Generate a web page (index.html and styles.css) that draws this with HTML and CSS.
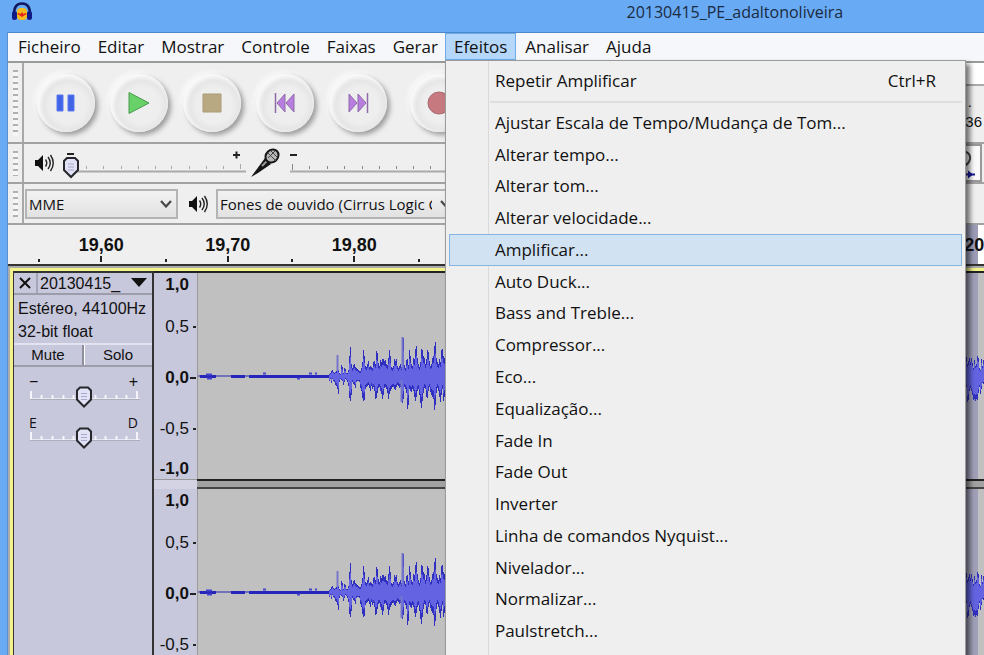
FILE: index.html
```html
<!DOCTYPE html>
<html lang="pt">
<head>
<meta charset="utf-8">
<title>20130415_PE_adaltonoliveira</title>
<link rel="stylesheet" href="styles.css">
</head>
<body>
<svg class="defs" width="0" height="0" aria-hidden="true">
  <symbol id="thumb" viewBox="0 0 18 22">
    <path d="M5 1.5h8l3 3v9l-7 7-7-7v-9z" fill="#e2e2f6" stroke="#26262c" stroke-width="2"/>
    <path d="M6 7.500h6M6 10.500h6M6 13.500h6" stroke="#a9a9cc"/>
  </symbol>
  <symbol id="speaker" viewBox="0 0 20 20">
    <path d="M1 7h3l5-5v16l-5-5H1z" fill="#111"/>
    <path d="M11.500 6.500q2.500 3.500 0 7M14 4q4.500 6 0 12M16.500 2q5.500 8 0 16" fill="none" stroke="#222" stroke-width="1.400"/>
  </symbol>
  <symbol id="chevron" viewBox="0 0 12 8"><path d="M1 1l5 5.500L11 1" fill="none" stroke="#484848" stroke-width="2.200"/></symbol>
</svg>

<header class="titlebar">
  <svg class="app-icon" width="22" height="20" viewBox="0 0 22 20" aria-hidden="true">
    <path d="M3 12C3 5 6 1.500 11 1.500S19 5 19 12" fill="none" stroke="#12185e" stroke-width="2.500"/>
    <rect x="6" y="6" width="10" height="12" rx="4" fill="#f7b91c"/>
    <path d="M6 12l2-1 1.500 1 1.500-2 1.500 2 1.500-1 2 1-2 1-1.500 1-1.500 1-1.500-1-1.500-1z" fill="#e8261b"/>
    <rect x="1" y="9" width="5" height="9" rx="2.500" fill="#101a86"/>
    <rect x="16" y="9" width="5" height="9" rx="2.500" fill="#101a86"/>
  </svg>
  <h1 class="title">20130415_PE_adaltonoliveira</h1>
</header>

<main class="window">
  <nav class="menubar">
    <button>Ficheiro</button>
    <button>Editar</button>
    <button>Mostrar</button>
    <button>Controle</button>
    <button>Faixas</button>
    <button>Gerar</button>
    <div class="menu-root">
      <button class="open" aria-expanded="true">Efeitos</button>
      <div class="menu" role="menu">
        <button role="menuitem" class="repeat"><span>Repetir Amplificar</span><span>Ctrl+R</span></button>
        <hr>
        <div class="menu-list">
          <button role="menuitem">Ajustar Escala de Tempo/Mudança de Tom...</button>
          <button role="menuitem">Alterar tempo...</button>
          <button role="menuitem">Alterar tom...</button>
          <button role="menuitem">Alterar velocidade...</button>
          <button role="menuitem" class="selected">Amplificar...</button>
          <button role="menuitem">Auto Duck...</button>
          <button role="menuitem">Bass and Treble...</button>
          <button role="menuitem">Compressor...</button>
          <button role="menuitem">Eco...</button>
          <button role="menuitem">Equalização...</button>
          <button role="menuitem">Fade In</button>
          <button role="menuitem">Fade Out</button>
          <button role="menuitem">Inverter</button>
          <button role="menuitem">Linha de comandos Nyquist...</button>
          <button role="menuitem">Nivelador...</button>
          <button role="menuitem">Normalizar...</button>
          <button role="menuitem">Paulstretch...</button>
        </div>
      </div>
    </div>
    <button>Analisar</button>
    <button>Ajuda</button>
  </nav>

  <section class="dock">
    <div class="row transport">
      <div class="grip"></div>
      <div class="round-buttons">
        <button aria-label="Pausa"><svg width="24" height="24"><path d="M3 4h6v16H3zM14 4h6v16h-6z" fill="#4163e6" stroke="#5b7af0"/></svg></button>
        <button aria-label="Tocar"><svg width="24" height="24"><path d="M2 1.500v21L22 12z" fill="#68d168" stroke="#4b9a4f"/></svg></button>
        <button aria-label="Parar"><svg width="24" height="24"><path d="M3 3h18v18H3z" fill="#b9a983" stroke="#aa9b77"/></svg></button>
        <button aria-label="Início"><svg width="24" height="24"><path d="M2.500 2v20" stroke="#8d6ba8" stroke-width="1.500"/><path d="M12 3v18L4 12zM21 3v18l-8-9z" fill="#b77ee0" stroke="#8d6ba8"/></svg></button>
        <button aria-label="Fim"><svg width="24" height="24"><path d="M21.500 2v20" stroke="#8d6ba8" stroke-width="1.500"/><path d="M3 3v18l8-9zM12 3v18l8-9z" fill="#b77ee0" stroke="#8d6ba8"/></svg></button>
        <button aria-label="Gravar" class="record"><svg width="24" height="24"><circle cx="12" cy="12" r="11" fill="#c67a80" stroke="#a86a6e"/></svg></button>
      </div>
      <div class="meter"><div class="meter-bar"></div><span class="meter-dot">.</span><span class="meter-scale">-36</span></div>
    </div>

    <div class="row mixer">
      <div class="grip"></div>
      <svg class="speaker" width="20" height="20" aria-hidden="true"><use href="#speaker"/></svg>
      <div class="slider">
        <svg width="190" height="34" aria-hidden="true">
          <path d="M10 25.500h176" stroke="#aaa" stroke-width="2"/>
          <path d="M26.500 20v3M43.500 20v3M61.500 20v3M78.500 20v3M95.500 20v3M111.500 20v3M129.500 20v3M146.500 20v3M163.500 20v3M180.500 18v5" stroke="#aaa"/>
          <path d="M7 8h7M173 9h7M176.500 5.500v7" stroke="#222" stroke-width="2"/>
          <use href="#thumb" x="2" y="10" width="18" height="23"/>
        </svg>
        <input type="range" aria-label="Volume de saída" value="0">
      </div>
      <svg class="mic" width="30" height="30" viewBox="0 0 30 30" aria-hidden="true">
        <path d="M1 29l14-19 6 6-13 9z" fill="#161616"/><path d="M12 18l5-5" stroke="#999" stroke-width="2"/>
        <ellipse cx="22" cy="8" rx="6" ry="7" transform="rotate(45 22 8)" fill="#b7b7b7" stroke="#161616" stroke-width="2"/>
        <path d="M18 5l8 8M21 3l6 6M18 10l7-7" stroke="#444"/>
      </svg>
      <div class="slider input-level">
        <svg width="190" height="34" aria-hidden="true">
          <path d="M8 25.500h182" stroke="#aaa" stroke-width="2"/>
          <path d="M10.500 18v6M27.500 20v3M45.500 20v3M62.500 20v3M80.500 20v3M97.500 20v3M114.500 20v3M131.500 20v3M148.500 20v3" stroke="#888"/>
          <path d="M8 9h7" stroke="#222" stroke-width="2"/>
        </svg>
        <input type="range" aria-label="Volume de entrada" value="100">
      </div>
      <div class="zoom-tool">
        <svg width="18" height="36" aria-hidden="true"><path d="M0 5q9 1 8 8-1 6-8 7" fill="none" stroke="#444" stroke-width="2"/><path d="M0 28.500h13" stroke="#1a1a9a" stroke-width="2"/><path d="M6 24.500l5 4-5 4z" fill="#1a1a9a"/></svg>
      </div>
    </div>

    <div class="row devices">
      <div class="grip"></div>
      <div class="select host"><select aria-label="Servidor de áudio"><option>MME</option></select><svg width="12" height="8"><use href="#chevron"/></svg></div>
      <svg class="speaker" width="20" height="20" aria-hidden="true"><use href="#speaker"/></svg>
      <div class="select output"><select aria-label="Saída de áudio"><option>Fones de ouvido (Cirrus Logic CS)</option></select><svg width="12" height="8"><use href="#chevron"/></svg></div>
    </div>
  </section>

  <section class="ruler">
    <span>19,60</span><span>19,70</span><span>19,80</span><span></span><span></span><span></span><span></span><span>20,30</span>
  </section>

  <section class="tracks">
    <div class="track">
      <aside class="panel">
        <div class="panel-title">
          <button aria-label="Fechar"><svg width="12" height="12"><path d="M1 1l10 10M11 1L1 11" stroke="#111" stroke-width="2"/></svg></button>
          <button class="name"><span>20130415_</span><svg width="16" height="10"><path d="M0 0h16l-8 9z" fill="#111"/></svg></button>
        </div>
        <p class="info">Estéreo, 44100Hz<br>32-bit float</p>
        <div class="toggles"><button>Mute</button><button>Solo</button></div>
        <div class="gain"><span>−</span><span>+</span></div>
        <div class="slider small">
          <svg width="112" height="22" aria-hidden="true">
            <path d="M1 13.500h110" stroke="#aeaebb"/><path d="M1 12.500h110" stroke="#e8e8f2"/>
            <path d="M2 5v8M12.500 9v4M23.500 9v4M34.500 9v4M44.500 9v4M66.500 9v4M76.500 9v4M87.500 9v4M97.500 9v4M108 5v8" stroke="#f4f4fa" stroke-width="2"/>
            <use href="#thumb" x="46" y="0" width="18" height="22"/>
          </svg>
          <input type="range" aria-label="Ganho">
        </div>
        <div class="gain pan"><span>E</span><span>D</span></div>
        <div class="slider small">
          <svg width="112" height="22" aria-hidden="true">
            <path d="M1 13.500h110" stroke="#aeaebb"/><path d="M1 12.500h110" stroke="#e8e8f2"/>
            <path d="M2 5v8M12.500 9v4M23.500 9v4M34.500 9v4M44.500 9v4M66.500 9v4M76.500 9v4M87.500 9v4M97.500 9v4M108 5v8" stroke="#f4f4fa" stroke-width="2"/>
            <use href="#thumb" x="46" y="0" width="18" height="22"/>
          </svg>
          <input type="range" aria-label="Balanço">
        </div>
      </aside>
      <div class="channels">
        <div class="channel">
          <div class="scale"><b>1,0</b><span class="tick">0,5</span><b class="tick zero">0,0</b><span class="tick">-0,5</span><b>-1,0</b></div>
          <svg class="wave" aria-hidden="true"></svg>
        </div>
        <div class="gap"><i></i><i class="bar"></i></div>
        <div class="channel">
          <div class="scale"><b>1,0</b><span class="tick">0,5</span><b class="tick zero">0,0</b><span class="tick">-0,5</span></div>
          <svg class="wave" aria-hidden="true"></svg>
        </div>
      </div>
    </div>
  </section>
</main>
<script src="wave.js"></script>
</body>
</html>
```
FILE: styles.css
```css
* { box-sizing: border-box; }
body {
  margin: 0;
  height: 100vh;
  overflow: hidden;
  display: flex;
  flex-direction: column;
  background: #69aaf5;
  color: #111;
  font: 17px/20px "Open Sans", "Noto Sans", sans-serif;
}
button, select { font: inherit; color: inherit; border: 0; background: none; padding: 0; margin: 0; }
.defs { position: absolute; }

.titlebar { display: flex; flex: none; height: 32px; padding-left: 11px; align-items: flex-start; }
.app-icon { margin-top: 2px; }
.title { margin: 2px 0 0 61%; font-size: 16px; font-weight: 400; line-height: 20px; color: #1b2b40; white-space: nowrap; }

.window {
  flex: 1;
  min-height: 0;
  display: flex;
  flex-direction: column;
  overflow: hidden;
  margin-left: 7px;
  border-left: 1px solid #5a8fd0;
  border-top: 1px solid #4c86cc;
  background: #efefef;
}
.menubar { display: flex; flex: none; height: 30px; padding: 0 0 2px 2px; background: #f5f7fa; border-bottom: 2px solid #9a9a9a; }
.menubar > button, .open { padding: 0 9px 0 8px; height: 27px; white-space: nowrap; }
.menu-root { position: relative; z-index: 2; margin: 0 1px 0 -2px; }
.menubar .open { background: #b5d8fa; border: 1px solid #6fabe6; padding: 0 8px; }

.menu {
  position: absolute;
  top: 27px;
  left: 0;
  width: 521px;
  height: 100vh;
  padding: 4px 3px;
  border: 1px solid #9b9b9b;
  background: linear-gradient(90deg, transparent 42px, #dadada 42px, #dadada 43px, transparent 43px) #efefef;
  box-shadow: 4px 4px 5px rgba(0, 0, 0, .55);
}
.menu button { display: flex; align-items: center; width: 100%; padding: 0 25px 0 45px; border: 1px solid transparent; text-align: left; white-space: nowrap; }
.menu .repeat { justify-content: space-between; height: 32px; }
.menu hr { margin: 4px 0 4px 41px; border: 0; border-top: 2px solid #dedede; }
.menu-list { display: grid; grid-auto-rows: 1fr; height: 540px; }
.menu .selected { background: #d1e2f2; border-color: #86b4e2; }

.row { display: flex; align-items: center; border-bottom: 2px solid #a2a2a2; overflow: hidden; }
.transport { height: 81px; }
.mixer { height: 40px; }
.devices { height: 41px; }
.grip {
  align-self: stretch;
  flex: none;
  width: 16px;
  border-right: 2px solid #a8a8a8;
  background: repeating-linear-gradient(#b0b0b0 0 2px, #f6f6f6 2px 6px) content-box #f6f6f6;
  padding: 7px 4px 6px 5px;
}
.round-buttons { display: flex; gap: 15px; margin-left: 13px; }
.round-buttons button {
  display: grid;
  place-items: center;
  width: 58px;
  height: 58px;
  border-radius: 50%;
  background: radial-gradient(circle at 54% 54%, #eee 40%, #e6e6e6 56%, #f8f8f8 68%);
  box-shadow: 3px 3px 5px #9c9c9c, -2px -2px 5px #fbfbfb;
}
.round-buttons .record { margin-left: 8px; }
.meter { display: flex; flex-direction: column; align-self: stretch; align-items: flex-end; width: 44px; margin-left: auto; padding-right: 2px; font: 15px/16px "Liberation Sans", sans-serif; }
.meter-bar { align-self: stretch; height: 23px; margin-right: -2px; background: #fff; border-bottom: 2px solid #aaa; }
.meter-dot { margin: 8px 10px 0 0; }
.meter-scale { margin-top: 4px; }
.speaker { flex: none; margin: 0 8px 0 10px; }
.mixer .speaker { margin-right: 6px; }
.slider { display: grid; flex: none; }
.slider > * { grid-area: 1 / 1; }
.slider input { width: 100%; height: 100%; margin: 0; opacity: 0; }
.mic { flex: none; }
.input-level { margin-left: 2px; }
.zoom-tool { display: flex; flex: none; justify-content: flex-end; width: 30px; height: 38px; margin: 0 2px 0 auto; border: 2px solid #999; background: #fafafa; }

.select { display: grid; align-items: center; height: 30px; border: 2px solid #b4b4b4; background: linear-gradient(#f2f2f2, #e2e2e2); font-size: 15px; }
.select > * { grid-area: 1 / 1; }
.select select { appearance: none; width: 100%; height: 26px; padding: 0 16px 0 2px; }
.select svg { justify-self: end; margin-right: 4px; pointer-events: none; }
.host { width: 153px; margin-left: 1px; }
.output { width: 242px; }
.output select { padding-right: 24px; }

.ruler {
  display: grid;
  grid-template-columns: repeat(8, 1fr);
  flex: none;
  height: 39px;
  padding-left: 30px;
  margin-right: -66px;
  overflow: hidden;
  background: linear-gradient(90deg, #efefef 958px, #9d9db8 958px, #9d9db8 970px, #fff 970px);
  font: bold 18px/20px "Liberation Sans", sans-serif;
  text-align: center;
}
.ruler span { padding-top: 10px; background: linear-gradient(#222, #222) 50% 100% / 2px 6px no-repeat, linear-gradient(#222, #222) 0 100% / 2px 3px no-repeat; margin-bottom: 2px; }

.tracks { flex: 1; min-height: 0; overflow: hidden; border-top: 2px solid #333; background: #ababab; padding: 2px 0 0 2px; }
.track { display: flex; border: 3px solid #f3f38c; border-right: 0; }
.panel { flex: none; width: 141px; border: solid #333; border-width: 2px 2px 0 1px; background: #c8c8dc; font: 16px/23px "Liberation Sans", sans-serif; }
.panel-title { display: flex; height: 22px; border-bottom: 2px solid #9c9cab; }
.panel-title button { display: flex; align-items: center; justify-content: center; width: 24px; border-right: 2px solid #a5a5b5; }
.panel-title .name { flex: 1; justify-content: space-between; padding: 0 5px 0 2px; border: 0; }
.info { margin: 0; height: 50px; padding: 2px 0 0 4px; white-space: nowrap; border-bottom: 2px solid #e4e4f0; }
.toggles { display: flex; height: 22px; border-bottom: 2px solid #9c9cab; font-size: 15px; }
.toggles button { flex: 1; line-height: 20px; }
.toggles button + button { border-left: 2px solid #8d8d9d; box-shadow: inset 1px 0 #fff; }
.gain { display: flex; justify-content: space-between; height: 8px; margin: 11px 14px 0 15px; line-height: 8px; }
.small { margin-left: 15px; }
.pan { font: 14px/8px "Open Sans", sans-serif; }

.channels { flex: 1; min-width: 0; }
.channel { display: flex; height: 206px; }
.channel:first-child { border-top: 2px solid #222; height: 208px; }
.scale { flex: none; display: grid; grid-template-rows: 24px 60px 42px 60px 20px; align-items: center; width: 44px; padding-right: 8px; background: #c8c8dc; border-right: 1px solid #999; text-align: right; font: 17px/20px "Liberation Sans", sans-serif; }
.tick { background: linear-gradient(#222, #222) 100% 50% / 3px 2px no-repeat; padding-right: 7px; margin-right: -7px; }
.zero { background-size: 6px 2px; }
.wave { flex: 1; min-width: 0; height: 206px; background: #c0c0c0; }
.gap { display: flex; height: 10px; }
.gap i { width: 43px; background: #d3d3e4; border-top: 1px solid #999; }
.gap .bar { flex: 1; background: #a2a2a2; border-top: 2px solid #222; border-bottom: 2px solid #444; }
```
FILE: wave.js
```js
// Peak heights in pixels above and below the zero line, one pair per column.
const up = [2,3,5,6,4,3,4,5,21,6,3,2,11,9,3,8,7,3,3,6,20,29,12,8,11,12,9,8,7,6,5,5,8,14,26,20,10,9,12,15,9,10,9,8,14,15,12,25,23,13,10,16,14,17,17,15,16,12,11,18,26,20,9,8,10,17,15,17,10,8,10,12,9,39,38,11,8,16,17,11,26,20,12,10,18,17,27,30,18,12,9,14,27,26,20,18,12,17,26,24,15,10,12,18,20,30,34,18,14,12,17,14,26,27,20,18];
const down = [4,2,6,2,4,5,8,9,12,17,5,2,3,4,8,5,2,3,5,9,21,24,18,5,7,8,11,5,4,4,5,11,14,21,24,23,12,10,9,8,11,14,9,12,10,14,22,21,16,11,10,14,17,22,18,11,10,12,16,22,17,14,12,10,10,12,13,10,8,9,11,10,25,26,22,10,12,16,32,28,12,14,15,12,14,20,24,20,14,12,18,26,31,24,16,11,12,20,21,14,10,15,18,20,22,33,28,16,11,14,20,25,18,12,24,20];
const edgeUp = [19,12,15,18,14,18,13,8,16,10,12,20,18,8,6,17,10,16];
const edgeDown = [10,25,23,14,11,14,18,23,22,24,22,23,16,10,17,12,6,7];
const zero = 103;

function bars(first, tops, bottoms, factor) {
  return tops.map((t, i) => `M${first + i + .5} ${zero - Math.round(t * factor)}V${zero + 1 + Math.round(bottoms[i] * factor)}`).join("");
}

document.querySelectorAll(".wave").forEach(svg => {
  svg.innerHTML = `
    <rect x="600" width="180" height="206" fill="#a0a0b8"/>
    <path d="M0 ${zero}h788" stroke="#2424b4"/>
    <path d="M2 103.500h16M33 103.500h14M51 103.500h80M60 103.500h70" stroke="#2626bd" stroke-width="3"/>
    <path d="M8 101.500h6M9 105.500h5M65 100.500h3M99 105.500h3M111 100.500h3M117 100.500h2" stroke="#4444cb" stroke-width="2"/>
    <path d="${bars(131, up, down, 1)}${bars(768, edgeUp, edgeDown, 1)}" stroke="#3030c0"/>
    <path d="${bars(131, up, down, .65)}${bars(768, edgeUp, edgeDown, .75)}" stroke="#6464e2"/>
    <path d="M139.500 82v16M204.500 64v32M203.500 107v22" stroke="#7777ca" stroke-width="2"/>`;
});
```
